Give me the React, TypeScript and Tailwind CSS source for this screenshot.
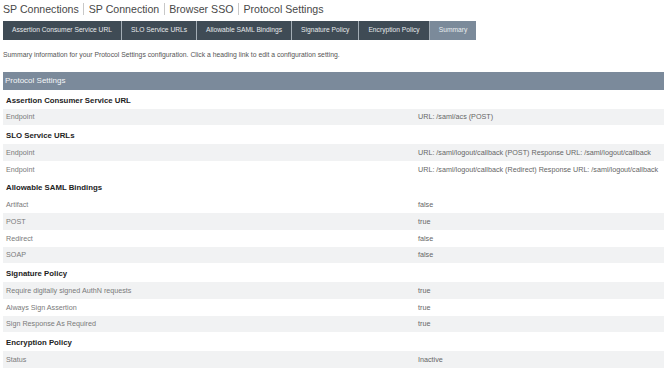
import React from "react";

type Row = { label: string; value: string; shaded: boolean };
type Section = { title: string; rows: Row[] };

const sections: Section[] = [
  {
    title: "Assertion Consumer Service URL",
    rows: [{ label: "Endpoint", value: "URL: /saml/acs (POST)", shaded: true }],
  },
  {
    title: "SLO Service URLs",
    rows: [
      {
        label: "Endpoint",
        value: "URL: /saml/logout/callback (POST) Response URL: /saml/logout/callback",
        shaded: true,
      },
      {
        label: "Endpoint",
        value: "URL: /saml/logout/callback (Redirect) Response URL: /saml/logout/callback",
        shaded: false,
      },
    ],
  },
  {
    title: "Allowable SAML Bindings",
    rows: [
      { label: "Artifact", value: "false", shaded: false },
      { label: "POST", value: "true", shaded: true },
      { label: "Redirect", value: "false", shaded: false },
      { label: "SOAP", value: "false", shaded: true },
    ],
  },
  {
    title: "Signature Policy",
    rows: [
      { label: "Require digitally signed AuthN requests", value: "true", shaded: true },
      { label: "Always Sign Assertion", value: "true", shaded: false },
      { label: "Sign Response As Required", value: "true", shaded: true },
    ],
  },
  {
    title: "Encryption Policy",
    rows: [{ label: "Status", value: "Inactive", shaded: true }],
  },
];

const tabs = [
  "Assertion Consumer Service URL",
  "SLO Service URLs",
  "Allowable SAML Bindings",
  "Signature Policy",
  "Encryption Policy",
  "Summary",
];

const crumbs = ["SP Connections", "SP Connection", "Browser SSO", "Protocol Settings"];

export default function App() {
  return (
    <div className="w-[664px] h-[370px] overflow-hidden bg-white pl-[3px] font-['Liberation_Sans',Arial,sans-serif]">
      <div className="flex h-[21px] items-center pb-[3px] text-[10.6px] leading-none text-[#484848]">
        {crumbs.map((c, i) => (
          <React.Fragment key={c}>
            {i > 0 && <span className="mx-[4.5px] h-[12px] w-px bg-[#c8c8c8]" />}
            <span>{c}</span>
          </React.Fragment>
        ))}
      </div>

      <div className="flex h-[19px]">
        {tabs.map((t, i) => {
          const active = t === "Summary";
          return (
            <div
              key={t}
              className={
                (active ? "bg-[#7b8a9a] text-[#e9edf0] " : "bg-[#3f4b55] text-[#e6e9eb] ") +
                (i > 0 ? "border-l border-[#a3adb5] " : "") +
                "flex items-center px-[9px] text-[6.7px] leading-none whitespace-nowrap"
              }
            >
              {t}
            </div>
          );
        })}
      </div>

      <div className="mt-[10px] h-[10px] flex items-center text-[6.8px] leading-none text-[#555]">
        Summary information for your Protocol Settings configuration. Click a heading link to edit a
        configuration setting.
      </div>

      <div className="mt-[12px] flex h-[18px] items-center bg-[#7b8a9b] pl-[2px] text-[8px] leading-none text-[#f4f6f8]">
        Protocol Settings
      </div>

      {sections.map((s) => (
        <div key={s.title}>
          <div className="flex h-[18.6px] items-center pt-[3px] pl-[3px] text-[7.8px] font-bold leading-none text-[#222]">
            {s.title}
          </div>
          {s.rows.map((r, i) => (
            <div
              key={i}
              className={
                (r.shaded ? "bg-[#f1f2f3] " : "bg-white ") +
                "grid h-[16.8px] grid-cols-[415px_1fr] items-center text-[7.2px] leading-none"
              }
            >
              <div className="pl-[3px] text-[#7a7a7a]">{r.label}</div>
              <div className="whitespace-nowrap text-[#666]">{r.value}</div>
            </div>
          ))}
        </div>
      ))}
    </div>
  );
}
